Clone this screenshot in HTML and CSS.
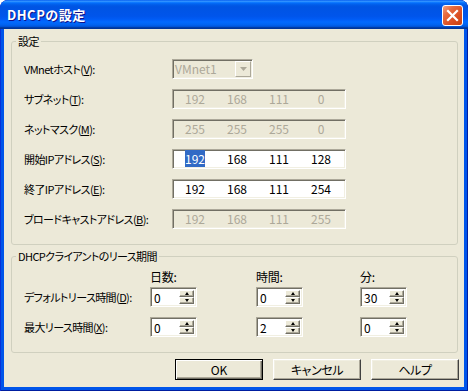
FILE: index.html
```html
<!DOCTYPE html>
<html lang="ja">
<head>
<meta charset="utf-8">
<title>DHCPの設定</title>
<link rel="stylesheet" href="styles.css">
</head>
<body>
<div class="window">
  <div class="titlebar">
    <span class="title">DHCPの設定</span>
    <div class="close">
      <svg width="21" height="21" viewBox="0 0 21 21"><path d="M6 6 L15 15 M15 6 L6 15" stroke="#fff" stroke-width="2.2" stroke-linecap="square"/></svg>
    </div>
  </div>
  <div class="client">
    <fieldset class="group g1">
      <legend>設定</legend>
      <div class="form">
        <span class="label">VMnetホスト(<u>V</u>):</span>
        <div class="combo sunken disabled">
          <span class="combo-text">VMnet1</span>
          <span class="combo-btn"><svg width="7" height="4" viewBox="0 0 7 4"><path d="M0 0 H7 L3.5 4 Z" fill="#ACA899"/></svg></span>
        </div>

        <span class="label">サブネット(<u>T</u>):</span>
        <div class="ip sunken disabled"><span>192</span><span>168</span><span>111</span><span>0</span></div>

        <span class="label">ネットマスク(<u>M</u>):</span>
        <div class="ip sunken disabled"><span>255</span><span>255</span><span>255</span><span>0</span></div>

        <span class="label">開始IPアドレス(<u>S</u>):</span>
        <div class="ip sunken"><span><span class="sel">192</span></span><span>168</span><span>111</span><span>128</span></div>

        <span class="label">終了IPアドレス(<u>E</u>):</span>
        <div class="ip sunken"><span>192</span><span>168</span><span>111</span><span>254</span></div>

        <span class="label">ブロードキャストアドレス(<u>B</u>):</span>
        <div class="ip sunken disabled"><span>192</span><span>168</span><span>111</span><span>255</span></div>
      </div>
    </fieldset>

    <fieldset class="group g2">
      <legend>DHCPクライアントのリース期間</legend>
      <div class="lease">
        <span></span>
        <span class="head">日数:</span>
        <span class="head">時間:</span>
        <span class="head">分:</span>

        <span class="label">デフォルトリース時間(<u>D</u>):</span>
        <div class="spin sunken"><span class="val">0</span><span class="btns"><span class="sb"><i class="up"></i></span><span class="sb"><i class="dn"></i></span></span></div>
        <div class="spin sunken"><span class="val">0</span><span class="btns"><span class="sb"><i class="up"></i></span><span class="sb"><i class="dn"></i></span></span></div>
        <div class="spin sunken"><span class="val">30</span><span class="btns"><span class="sb"><i class="up"></i></span><span class="sb"><i class="dn"></i></span></span></div>

        <span class="label">最大リース時間(<u>X</u>):</span>
        <div class="spin sunken"><span class="val">0</span><span class="btns"><span class="sb"><i class="up"></i></span><span class="sb"><i class="dn"></i></span></span></div>
        <div class="spin sunken"><span class="val">2</span><span class="btns"><span class="sb"><i class="up"></i></span><span class="sb"><i class="dn"></i></span></span></div>
        <div class="spin sunken"><span class="val">0</span><span class="btns"><span class="sb"><i class="up"></i></span><span class="sb"><i class="dn"></i></span></span></div>
      </div>
    </fieldset>

    <div class="buttons">
      <div class="btn default">OK</div>
      <div class="btn jp">キャンセル</div>
      <div class="btn jp">ヘルプ</div>
    </div>
  </div>
</div>
</body>
</html>
```

FILE: styles.css
```css
* { box-sizing: border-box; }
html, body { margin: 0; padding: 0; background: #fff; }
body {
  font-family: "Noto Sans CJK JP", "Noto Sans", sans-serif;
  font-size: 11px;
  line-height: 14px;
  color: #000;
  font-feature-settings: "palt" 1;
}

.window {
  width: 468px;
  height: 391px;
  display: flex;
  flex-direction: column;
  background: #0055EA;
  border-radius: 8px 8px 0 0;
  overflow: hidden;
  box-shadow: inset 1px 0 #0831D9, inset -1px 0 #001EA0, inset 0 -1px #001EA0;
}

.titlebar {
  height: 29px;
  flex: none;
  display: flex;
  align-items: center;
  justify-content: space-between;
  padding: 0 5px 0 7px;
  border-radius: 8px 8px 0 0;
  background: linear-gradient(to bottom, #0058ee 0%, #3593ff 4%, #288eff 6%, #127dff 8%, #036ffc 10%, #0262ee 14%, #0057e5 20%, #0054e3 24%, #0055eb 56%, #005bf5 66%, #026afe 76%, #0062ef 86%, #0052d6 92%, #0040ab 94%, #003092 100%);
}

.title {
  color: #fff;
  font-weight: bold;
  font-size: 13px;
  letter-spacing: 0.5px;
  text-shadow: 1px 1px #0F1089;
  padding-top: 1px;
}

.close {
  width: 21px;
  height: 21px;
  border: 1px solid #fff;
  border-radius: 3px;
  background: linear-gradient(135deg, #F0A080 0%, #E66A3E 30%, #DB4E22 65%, #C8400F 100%);
  display: flex;
  align-items: center;
  justify-content: center;
  margin-top: 2px;
}
.close svg { display: block; margin: -1px; }

.client {
  flex: 1;
  margin: 0 4px 4px;
  background: #ECE9D8;
  padding: 5px 5px 0 7px;
  display: flex;
  flex-direction: column;
}

.group {
  margin: 0;
  padding: 0;
  width: 447px;
  min-width: 0;
  border: 1px solid #D0D0BF;
  border-radius: 3px;
}
.group legend {
  margin-left: 4px;
  padding: 0 2px;
  height: 14px;
  line-height: 14px;
  letter-spacing: -0.6px;
}
.g2 { margin-top: 4px; }

.form {
  display: grid;
  grid-template-columns: 148px auto;
  grid-auto-rows: 20px;
  row-gap: 10px;
  align-items: center;
  padding: 11px 0 15px 12px;
}
.label { line-height: 20px; white-space: nowrap; letter-spacing: -0.6px; }
.head { letter-spacing: -0.3px; }
.jp { letter-spacing: -0.4px; }
u { text-decoration: underline; text-underline-offset: 1px; }

.sunken {
  border: 1px solid;
  border-color: #ACA899 #fff #fff #ACA899;
  box-shadow: inset 1px 1px #716F64, inset -1px -1px #F1EFE2;
  background: #fff;
}
.sunken.disabled { background: #ECE9D8; color: #ACA899; }

.combo {
  width: 81px;
  height: 20px;
  display: flex;
  align-items: center;
  justify-content: space-between;
  padding: 2px 1px 2px 2px;
  font-size: 12px;
}
.combo-text { line-height: 14px; }
.combo-btn {
  width: 16px;
  height: 16px;
  border: 1px solid;
  border-color: #fff #ACA899 #ACA899 #fff;
  background: #ECE9D8;
  display: flex;
  align-items: center;
  justify-content: center;
}
.combo-btn svg { display: block; }

.ip {
  width: 174px;
  height: 20px;
  display: grid;
  grid-template-columns: repeat(4, 42px);
  align-items: center;
  padding: 0 1px;
  font-size: 12px;
}
.ip > span { text-align: center; line-height: 14px; }
.sel { background: #316AC5; color: #fff; padding: 0; }

.lease {
  display: grid;
  grid-template-columns: 126px 106px 104px auto;
  grid-template-rows: 17px 30px 20px;
  align-items: start;
  padding: 7px 0 15px 12px;
}
.head { line-height: 14px; font-size: 12px; }
.spin {
  width: 47px;
  height: 20px;
  display: flex;
  padding: 2px;
  font-size: 12px;
}
.spin .val { flex: 1; line-height: 16px; padding-left: 1px; }
.spin .btns { width: 15px; display: flex; flex-direction: column; }
.sb {
  flex: 1;
  border: 1px solid;
  border-color: #fff #716F64 #716F64 #fff;
  box-shadow: inset -1px -1px #ACA899;
  background: #ECE9D8;
  display: flex;
  align-items: center;
  justify-content: center;
}
.sb i { display: block; width: 0; height: 0; border-left: 2.5px solid transparent; border-right: 2.5px solid transparent; }
.sb i.up { border-bottom: 3px solid #000; }
.sb i.dn { border-top: 3px solid #000; }

.buttons {
  margin-top: 6px;
  display: flex;
  justify-content: flex-end;
  gap: 10px;
}
.btn {
  width: 88px;
  height: 21px;
  border: 1px solid;
  border-color: #fff #404040 #404040 #fff;
  box-shadow: inset -1px -1px #ACA899, inset 1px 1px #F1EFE2;
  background: #ECE9D8;
  display: flex;
  align-items: center;
  justify-content: center;
  line-height: 14px;
  font-size: 12px;
}
.btn.default {
  border-color: #000;
  box-shadow: inset 1px 1px #fff, inset -1px -1px #716F64, inset -2px -2px #ACA899;
}
```
